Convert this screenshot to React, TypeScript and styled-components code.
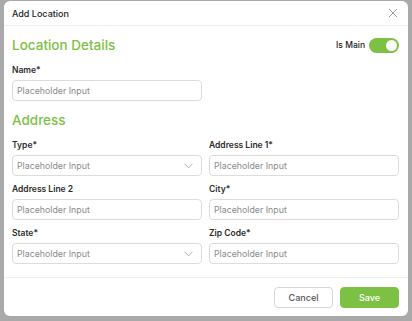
import React from "react";
import styled, { createGlobalStyle } from "styled-components";

const GlobalStyle = createGlobalStyle`
  html, body {
    margin: 0;
    padding: 0;
  }
  body {
    font-family: "Inter", "Open Sans", sans-serif;
    background: #a9a9a9;
  }
`;

const green = "#7cc143";

const Backdrop = styled.div`
  width: 412px;
  height: 321px;
  box-sizing: border-box;
  padding: 1px 0 0 4px;
  background: #a9a9a9;
  overflow: hidden;
`;

const Modal = styled.div`
  width: 404px;
  height: 315px;
  background: #fff;
  border-radius: 6px;
  display: flex;
  flex-direction: column;
  box-sizing: border-box;
`;

const Header = styled.div`
  height: 25px;
  display: flex;
  align-items: center;
  justify-content: space-between;
  padding: 0 9px 0 8px;
  border-bottom: 1px solid #efefef;
  box-sizing: border-box;
`;

const Title = styled.div`
  font-size: 9px;
  font-weight: 500;
  color: #222;
`;

const CloseButton = styled.button`
  border: none;
  background: none;
  padding: 0;
  width: 12px;
  height: 12px;
  display: flex;
  align-items: center;
  justify-content: center;
  cursor: pointer;
`;

const Body = styled.div`
  flex: 1;
  padding: 9px 9px 0 8px;
  display: flex;
  flex-direction: column;
  border-bottom: 1px solid #efefef;
`;

const SectionRow = styled.div`
  height: 20px;
  display: flex;
  align-items: center;
  justify-content: space-between;
`;

const SectionTitle = styled.h2<{ $top?: number }>`
  margin: ${(p) => p.$top ?? 0}px 0 0;
  height: 20px;
  line-height: 20px;
  font-size: 13.5px;
  font-weight: 500;
  color: ${green};
`;

const SwitchWrap = styled.label`
  display: flex;
  align-items: center;
  gap: 4px;
  font-size: 8.5px;
  font-weight: 500;
  color: #222;
`;

const Track = styled.span<{ $on: boolean }>`
  width: 30px;
  height: 15px;
  border-radius: 8px;
  background: ${(p) => (p.$on ? green : "#ccc")};
  display: flex;
  align-items: center;
  justify-content: ${(p) => (p.$on ? "flex-end" : "flex-start")};
  padding: 0 2px;
  box-sizing: border-box;
`;

const Knob = styled.span`
  width: 11px;
  height: 11px;
  border-radius: 50%;
  background: #fff;
`;

const Grid = styled.div<{ $top: number }>`
  display: grid;
  grid-template-columns: 190px 190px;
  column-gap: 7px;
  row-gap: 6px;
  margin-top: ${(p) => p.$top}px;
`;

const Field = styled.div`
  display: flex;
  flex-direction: column;
  gap: 3px;
`;

const Label = styled.div`
  height: 14px;
  line-height: 14px;
  font-size: 8.5px;
  font-weight: 600;
  color: #2b2b2b;
`;

const InputBox = styled.div`
  height: 21px;
  border: 1px solid #dcdcdc;
  border-radius: 4px;
  box-sizing: border-box;
  display: flex;
  align-items: center;
  justify-content: space-between;
  padding: 0 8px 0 4px;
  font-size: 8.8px;
  color: #8a8a8a;
`;

const Footer = styled.div`
  height: 38px;
  display: flex;
  align-items: center;
  justify-content: flex-end;
  gap: 7px;
  padding: 0 9px 0 8px;
`;

const Button = styled.button<{ $primary?: boolean }>`
  width: 59px;
  height: 21px;
  border-radius: 4px;
  font-family: "Inter", sans-serif;
  font-size: 9px;
  font-weight: 500;
  cursor: pointer;
  border: 1px solid ${(p) => (p.$primary ? green : "#d6d6d6")};
  background: ${(p) => (p.$primary ? green : "#fff")};
  color: ${(p) => (p.$primary ? "#fff" : "#555")};
`;

const Chevron = () => (
  <svg width="9" height="6" viewBox="0 0 9 6" fill="none">
    <path d="M0.5 0.8 L4.5 4.8 L8.5 0.8" stroke="#a0a0a0" strokeWidth="0.9" />
  </svg>
);

type FieldProps = { label: string; select?: boolean };

const FormField = ({ label, select }: FieldProps) => (
  <Field>
    <Label>{label}</Label>
    <InputBox>
      <span>Placeholder Input</span>
      {select && <Chevron />}
    </InputBox>
  </Field>
);

const App = () => {
  return (
    <>
      <GlobalStyle />
      <Backdrop>
        <Modal>
          <Header>
            <Title>Add Location</Title>
            <CloseButton aria-label="Close">
              <svg width="10" height="10" viewBox="0 0 10 10">
                <path d="M1 1 L9 9 M9 1 L1 9" stroke="#9a9a9a" strokeWidth="1" />
              </svg>
            </CloseButton>
          </Header>
          <Body>
            <SectionRow>
              <SectionTitle>Location Details</SectionTitle>
              <SwitchWrap>
                Is Main
                <Track $on>
                  <Knob />
                </Track>
              </SwitchWrap>
            </SectionRow>
            <Grid $top={8}>
              <FormField label="Name*" />
            </Grid>
            <SectionTitle $top={9}>Address</SectionTitle>
            <Grid $top={8}>
              <FormField label="Type*" select />
              <FormField label="Address Line 1*" />
              <FormField label="Address Line 2" />
              <FormField label="City*" />
              <FormField label="State*" select />
              <FormField label="Zip Code*" />
            </Grid>
          </Body>
          <Footer>
            <Button>Cancel</Button>
            <Button $primary>Save</Button>
          </Footer>
        </Modal>
      </Backdrop>
    </>
  );
};

export default App;
